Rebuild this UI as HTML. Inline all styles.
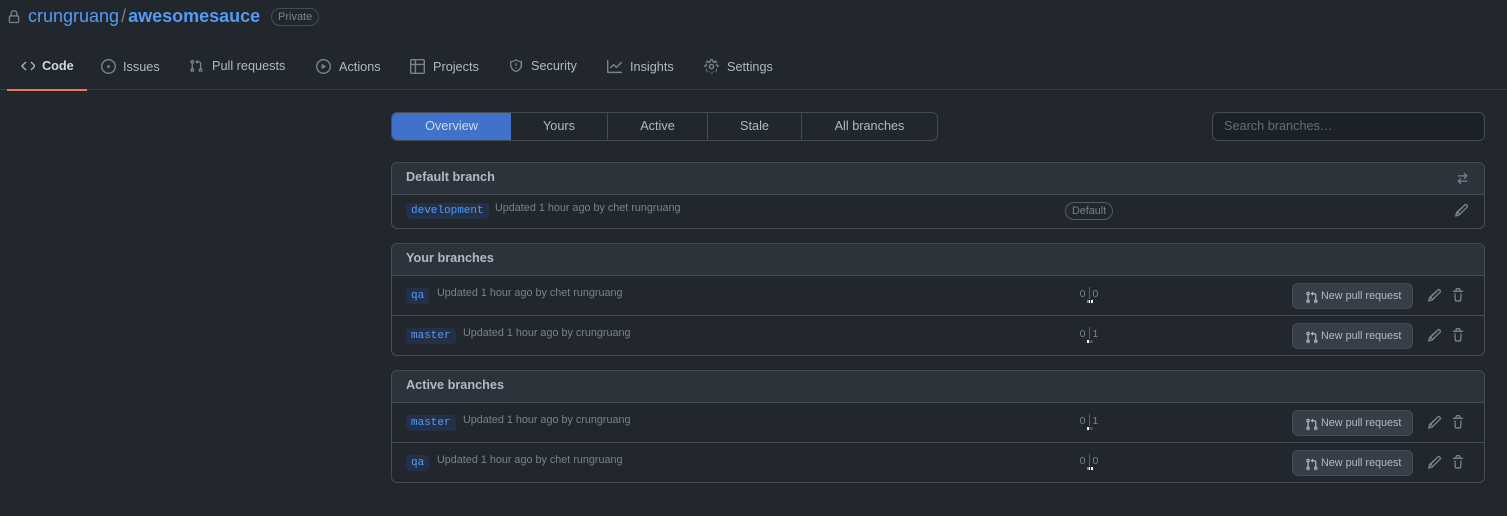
<!DOCTYPE html>
<html><head><meta charset="utf-8"><style>
*{box-sizing:border-box;margin:0;padding:0}
body{width:1507px;height:516px;background:#22272e;font-family:"Liberation Sans",sans-serif;color:#adbac7;position:relative;overflow:hidden}
.abs{position:absolute}
svg{fill:#768390}
.nav{position:absolute;top:59px;font-size:12.7px;color:#adbac7;display:flex;align-items:center;gap:7px}
.box{position:absolute;left:391px;width:1094px;border:1px solid #444c56;border-radius:6px;overflow:hidden}
.hd{background:#2d333b;height:32px;border-bottom:1px solid #444c56;font-size:12.7px;font-weight:bold;color:#adbac7;padding:7px 14px}
.row{height:40px;border-bottom:1px solid #444c56;position:relative}
.row:last-child{border-bottom:none}
.br{position:absolute;left:14px;top:12px;font-family:"Liberation Mono",monospace;font-size:11px;color:#539bf5;background:#243048;border-radius:4px;padding:2px 5px}
.up{position:absolute;top:11px;font-size:10.8px;color:#768390}
.cnt{position:absolute;left:685px;top:11px;font-size:10.5px;color:#768390;width:24px;text-align:center}
.cnt i{display:inline-block;width:1px;height:12px;background:#545d68;vertical-align:-2px;margin:0 3px}
.bar{position:absolute;left:695px;top:24px;width:6px;height:3px}
.btn{position:absolute;left:900px;top:7px;width:121px;height:26px;background:#373e47;border:1px solid #444c56;border-radius:6px;font-size:10.8px;color:#adbac7;padding:6px 0 0 12px;display:flex;gap:3px}
.btn svg{margin-top:1px}
.ic{position:absolute;top:12px}
</style></head><body>
<svg class="abs" style="left:7px;top:10px" width="14" height="14" viewBox="0 0 16 16"><path d="M4 4a4 4 0 018 0v2h.25c.97 0 1.75.78 1.75 1.75v5.5c0 .97-.78 1.75-1.75 1.75h-8.5C2.78 15 2 14.22 2 13.25v-5.5C2 6.78 2.78 6 3.75 6H4zm8.25 3.5h-8.5a.25.25 0 00-.25.25v5.5c0 .14.11.25.25.25h8.5a.25.25 0 00.25-.25v-5.5a.25.25 0 00-.25-.25zM10.5 6V4a2.5 2.5 0 00-5 0v2z"/></svg>
<div class="abs" style="left:28px;top:6px;font-size:18px;color:#539bf5">crungruang <span style="color:#768390;margin:0 -3px">/</span> <b>awesomesauce</b></div>
<div class="abs" style="left:271px;top:8px;font-size:11px;color:#768390;border:1px solid #444c56;border-radius:10px;padding:2px 6px">Private</div>

<div class="nav" style="left:21px;font-weight:bold;color:#cdd9e5"><svg width="14" height="14" viewBox="0 0 16 16"><path d="M4.72 3.22a.75.75 0 011.06 1.06L2.06 8l3.72 3.72a.75.75 0 11-1.06 1.06L.47 8.53a.75.75 0 010-1.06zm6.56 0a.75.75 0 011.06 0l4.25 4.25a.75.75 0 010 1.06l-4.25 4.25a.75.75 0 01-1.06-1.06L14.94 8l-3.72-3.72a.75.75 0 010-1.06z" fill="#adbac7"/></svg>Code</div>
<div class="nav" style="left:101px"><svg width="15" height="15" viewBox="0 0 16 16"><path d="M8 9.5a1.5 1.5 0 100-3 1.5 1.5 0 000 3z"/><path d="M8 0a8 8 0 110 16A8 8 0 018 0zM1.5 8a6.5 6.5 0 1013 0 6.5 6.5 0 00-13 0z"/></svg>Issues</div>
<div class="nav" style="left:189px;gap:9px"><svg width="14" height="14" viewBox="0 0 16 16"><path d="M1.5 3.25a2.25 2.25 0 113 2.12v5.26a2.25 2.25 0 11-1.5 0V5.37A2.25 2.25 0 011.5 3.25zm5.68-.03L9.44.97a.25.25 0 01.43.17V2.5h1.38A2.75 2.75 0 0114 5.25v5.38a2.25 2.25 0 11-1.5 0V5.25c0-.69-.56-1.25-1.25-1.25H9.87v1.36a.25.25 0 01-.43.18L7.18 3.54a.25.25 0 010-.32zM3.750 12.5a.75.75 0 100 1.5.75.75 0 000-1.5zm9.5 0a.75.75 0 100 1.5.75.75 0 000-1.5zM3.75 2.5a.75.75 0 100 1.5.75.75 0 000-1.5z"/></svg>Pull requests</div>
<div class="nav" style="left:316px;gap:8px"><svg width="15" height="15" viewBox="0 0 16 16"><path d="M8 0a8 8 0 110 16A8 8 0 018 0zM1.5 8a6.5 6.5 0 1013 0 6.5 6.5 0 00-13 0zm4.88-2.64 4.29 2.43a.25.25 0 010 .43l-4.29 2.43A.25.25 0 016 10.43V5.57a.25.25 0 01.38-.21z"/></svg>Actions</div>
<div class="nav" style="left:410px;gap:8px"><svg width="15" height="15" viewBox="0 0 16 16"><path d="M0 1.75C0 .78.78 0 1.75 0h12.5C15.22 0 16 .78 16 1.75v12.5A1.75 1.75 0 0114.25 16H1.75A1.75 1.75 0 010 14.25zM6.5 6.5v8h7.75a.25.25 0 00.25-.25V6.5zm8-1.5V1.75a.25.25 0 00-.25-.25H6.5V5zM5 5V1.5H1.75a.25.25 0 00-.25.25V5zM1.5 6.5v7.75c0 .14.11.25.25.25H5v-8z"/></svg>Projects</div>
<div class="nav" style="left:509px;gap:8px"><svg width="14" height="14" viewBox="0 0 16 16"><path d="M7.47.22a.75.75 0 011.06 0c1.4 1.14 3.5 2.02 5.72 2.030.41 0 .75.34.75.75v3.25c0 4.2-2.57 7.35-6.72 8.7a.75.75 0 01-.46 0C3.67 13.6 1.25 10.45 1.25 6.25V3c0-.41.34-.75.75-.75 2.22-.01 4.32-.89 5.470-2.03zM2.75 3.7v2.55c0 3.4 1.92 5.97 5.25 7.2 3.33-1.23 5.25-3.8 5.25-7.2V3.7A10.4 10.4 0 018 1.72 10.4 10.4 0 012.75 3.7zM8 4.5a.75.75 0 01.75.75v2a.75.75 0 01-1.5 0v-2A.75.75 0 018 4.5zm0 5a.75.75 0 110 1.5.75.75 0 010-1.5z"/></svg>Security</div>
<div class="nav" style="left:607px;gap:8px"><svg width="15" height="15" viewBox="0 0 16 16"><path d="M1.5 1.75V13.5h13.75a.75.75 0 010 1.5H.75a.75.75 0 01-.75-.75V1.75a.75.75 0 011.5 0zm14.28 2.53-5.25 5.25a.75.75 0 01-1.06 0L7 7.06 4.28 9.78a.75.75 0 01-1.06-1.06l3.25-3.25a.75.75 0 011.06 0L10 7.94l4.72-4.72a.75.75 0 111.06 1.06z"/></svg>Insights</div>
<div class="nav" style="left:704px;gap:8px"><svg width="15" height="15" viewBox="0 0 16 16"><path d="M8 0a8.2 8.2 0 01.7.03c.4.03.7.3.8.68l.4 1.6c.2.07.4.16.6.26l1.4-.85a.9.9 0 011 .06c.4.3.7.6 1 1a.9.9 0 01.07 1l-.85 1.4c.1.2.19.4.26.6l1.6.4c.38.1.65.4.68.8a8.2 8.2 0 010 1.4.9.9 0 01-.68.8l-1.6.4c-.07.2-.16.4-.26.6l.85 1.4a.9.9 0 01-.06 1c-.3.4-.6.7-1 1a.9.9 0 01-1 .07l-1.4-.85c-.2.1-.4.19-.6.26l-.4 1.6a.9.9 0 01-.8.68 8.2 8.2 0 01-1.4 0 .9.9 0 01-.8-.68l-.4-1.6c-.2-.07-.4-.16-.6-.26l-1.4.85a.9.9 0 01-1-.06c-.4-.3-.7-.6-1-1a.9.9 0 01-.07-1l.85-1.4c-.1-.2-.19-.4-.26-.6l-1.6-.4a.9.9 0 01-.68-.8 8.2 8.2 0 010-1.4.9.9 0 01.68-.8l1.6-.4c.07-.2.16-.4.26-.6l-.85-1.4a.9.9 0 01.06-1c.3-.4.6-.7 1-1a.9.9 0 011-.07l1.4.85c.2-.1.4-.19.6-.26l.4-1.6A.9.9 0 017.3.03 8.2 8.2 0 018 0zm-.45 1.5-.4 1.7a.75.75 0 01-.55.55 5 5 0 00-1.2.5.75.75 0 01-.76 0l-1.5-.9-.64.64.9 1.5a.75.75 0 010 .76 5 5 0 00-.5 1.2.75.75 0 01-.55.55l-1.7.4v.9l1.7.4c.27.07.48.28.55.55.1.42.27.82.5 1.2.14.24.14.53 0 .76l-.9 1.5.64.64 1.5-.9a.75.75 0 01.76 0c.38.23.78.4 1.2.5.27.07.48.28.55.55l.4 1.7h.9l.4-1.7a.75.75 0 01.55-.55 5 5 0 001.2-.5.75.75 0 01.76 0l1.5.9.64-.64-.9-1.5a.75.75 0 010-.76c.23-.38.4-.78.5-1.2a.75.75 0 01.55-.55l1.7-.4v-.9l-1.7-.4a.75.75 0 01-.55-.55 5 5 0 00-.5-1.2.75.75 0 010-.76l.9-1.5-.64-.64-1.5.9a.75.75 0 01-.76 0 5 5 0 00-1.2-.5.75.75 0 01-.55-.55l-.4-1.7zM8 5a3 3 0 110 6 3 3 0 010-6zm0 1.5a1.5 1.5 0 100 3 1.5 1.5 0 000-3z"/></svg>Settings</div>
<div class="abs" style="left:0;top:89px;width:1507px;height:1px;background:#373e47"></div>
<div class="abs" style="left:7px;top:89px;width:80px;height:2px;background:#ec775c"></div>

<div class="abs" style="left:391px;top:112px;width:547px;height:29px;border:1px solid #444c56;border-radius:6px;display:flex;font-size:12.7px;color:#adbac7;overflow:hidden">
<div style="width:119px;background:#4172cb;color:#cdd9e5;text-align:center;padding-top:6px">Overview</div>
<div style="width:97px;border-right:1px solid #444c56;text-align:center;padding-top:6px">Yours</div>
<div style="width:100px;border-right:1px solid #444c56;text-align:center;padding-top:6px">Active</div>
<div style="width:94px;border-right:1px solid #444c56;text-align:center;padding-top:6px">Stale</div>
<div style="flex:1;text-align:center;padding-top:6px">All branches</div>
</div>
<div class="abs" style="left:1212px;top:112px;width:273px;height:29px;border:1px solid #444c56;border-radius:6px;background:#1c2128;font-size:12.7px;color:#636e7b;padding:6px 11px">Search branches…</div>

<div class="box" style="top:162px;height:67px">
<div class="hd">Default branch</div>
<svg class="abs" style="left:1064px;top:9px" width="13" height="13" viewBox="0 0 16 16"><path d="M5.22 14.78a.75.75 0 001.06-1.06L4.56 12h8.69a.75.75 0 000-1.5H4.56l1.72-1.72a.75.75 0 00-1.06-1.06l-3 3a.75.75 0 000 1.06zm5.56-6.5a.75.75 0 11-1.060-1.06l1.72-1.72H2.75a.75.75 0 010-1.5h8.69L9.72 2.28a.75.75 0 011.06-1.06l3 3a.75.75 0 010 1.06z"/></svg>
<div class="row"><span class="br" style="top:8px">development</span><span class="up" style="left:103px;top:7px">Updated 1 hour ago by chet rungruang</span>
<span class="abs" style="left:673px;top:7px;font-size:10.8px;color:#768390;border:1px solid #545d68;border-radius:10px;padding:2px 6px">Default</span>
<svg class="ic" style="left:1063px;top:8px" width="14" height="14" viewBox="0 0 16 16"><path d="M11.01 1.47a1.75 1.75 0 012.47 0l1.05 1.05c.68.68.68 1.79 0 2.47l-9.1 9.1c-.2.2-.45.36-.73.44l-3.74 1.07a.75.75 0 01-.93-.93l1.07-3.74c.08-.28.24-.53.44-.73zm1.41 1.06a.25.25 0 00-.35 0l-8.06 8.06 1.4 1.4 8.06-8.06a.25.25 0 000-.35zM3.05 11.7l-.6 2.1 2.1-.6z"/></svg>
</div></div>

<div class="box" style="top:243px;height:113px"><div class="hd">Your branches</div>
<div class="row"><span class="br">qa</span><span class="up" style="left:45px">Updated 1 hour ago by chet rungruang</span>
<span class="cnt">0<i></i>0</span><span class="bar" style="background:linear-gradient(90deg,#768390 0 2px,#fff 2px 3px,#22272e 3px 4px,#fff 4px 6px)"></span>
<div class="btn">PR New pull request</div><svg class="ic" style="left:1036px" width="14" height="14" viewBox="0 0 16 16"><path d="M11.01 1.47a1.75 1.75 0 012.47 0l1.05 1.05c.68.68.68 1.79 0 2.47l-9.1 9.1c-.2.2-.45.36-.73.44l-3.74 1.07a.75.75 0 01-.93-.93l1.07-3.74c.08-.28.24-.53.44-.73zm1.41 1.06a.25.25 0 00-.35 0l-8.06 8.06 1.4 1.4 8.06-8.06a.25.25 0 000-.35zM3.05 11.7l-.6 2.1 2.1-.6z"/></svg>TR</div>
<div class="row"><span class="br">master</span><span class="up" style="left:71px">Updated 1 hour ago by crungruang</span>
<span class="cnt">0<i></i>1</span><span class="bar" style="background:linear-gradient(90deg,#fff 0 2px,#444c56 2px 6px)"></span>
<div class="btn">PR New pull request</div><svg class="ic" style="left:1036px" width="14" height="14" viewBox="0 0 16 16"><path d="M11.01 1.47a1.75 1.75 0 012.47 0l1.05 1.05c.68.68.68 1.79 0 2.47l-9.1 9.1c-.2.2-.45.36-.73.44l-3.74 1.07a.75.75 0 01-.93-.93l1.07-3.74c.08-.28.24-.53.44-.73zm1.41 1.06a.25.25 0 00-.35 0l-8.06 8.06 1.4 1.4 8.06-8.06a.25.25 0 000-.35zM3.05 11.7l-.6 2.1 2.1-.6z"/></svg>TR</div>
</div>

<div class="box" style="top:370px;height:113px"><div class="hd">Active branches</div>
<div class="row"><span class="br">master</span><span class="up" style="left:71px">Updated 1 hour ago by crungruang</span>
<span class="cnt">0<i></i>1</span><span class="bar" style="background:linear-gradient(90deg,#fff 0 2px,#444c56 2px 6px)"></span>
<div class="btn">PR New pull request</div><svg class="ic" style="left:1036px" width="14" height="14" viewBox="0 0 16 16"><path d="M11.01 1.47a1.75 1.75 0 012.47 0l1.05 1.05c.68.68.68 1.79 0 2.47l-9.1 9.1c-.2.2-.45.36-.73.44l-3.74 1.07a.75.75 0 01-.93-.93l1.07-3.74c.08-.28.24-.53.44-.73zm1.41 1.06a.25.25 0 00-.35 0l-8.06 8.06 1.4 1.4 8.06-8.06a.25.25 0 000-.35zM3.05 11.7l-.6 2.1 2.1-.6z"/></svg>TR</div>
<div class="row"><span class="br">qa</span><span class="up" style="left:45px">Updated 1 hour ago by chet rungruang</span>
<span class="cnt">0<i></i>0</span><span class="bar" style="background:linear-gradient(90deg,#768390 0 2px,#fff 2px 3px,#22272e 3px 4px,#fff 4px 6px)"></span>
<div class="btn">PR New pull request</div><svg class="ic" style="left:1036px" width="14" height="14" viewBox="0 0 16 16"><path d="M11.01 1.47a1.75 1.75 0 012.47 0l1.05 1.05c.68.68.68 1.79 0 2.47l-9.1 9.1c-.2.2-.45.36-.73.44l-3.74 1.07a.75.75 0 01-.93-.93l1.07-3.74c.08-.28.24-.53.44-.73zm1.41 1.06a.25.25 0 00-.35 0l-8.06 8.06 1.4 1.4 8.06-8.06a.25.25 0 000-.35zM3.05 11.7l-.6 2.1 2.1-.6z"/></svg>TR</div>
</div>

<script>
var pr='<svg width="13" height="13" viewBox="0 0 16 16"><path d="M1.5 3.25a2.25 2.25 0 113 2.12v5.26a2.25 2.25 0 11-1.5 0V5.37A2.25 2.25 0 011.5 3.25zm5.68-.03L9.44.97a.25.25 0 01.43.17V2.5h1.38A2.75 2.75 0 0114 5.25v5.38a2.25 2.25 0 11-1.5 0V5.25c0-.69-.56-1.25-1.25-1.25H9.87v1.36a.25.25 0 01-.43.18L7.18 3.54a.25.25 0 010-.32zM3.75 12.5a.75.75 0 100 1.5.75.75 0 000-1.5zm9.5 0a.75.75 0 100 1.5.75.75 0 000-1.5zM3.75 2.5a.75.75 0 100 1.5.75.75 0 000-1.5z" fill="#adbac7"/></svg>';
var tr='<svg class="ic" style="left:1059px" width="14" height="14" viewBox="0 0 16 16"><path d="M11 1.75V3h2.25a.75.75 0 010 1.5H2.75a.75.75 0 010-1.5H5V1.75C5 .78 5.78 0 6.75 0h2.5C10.22 0 11 .78 11 1.75zM6.5 1.75V3h3V1.75a.25.25 0 00-.25-.25h-2.5a.25.25 0 00-.25.25zM4.5 6a.75.75 0 01.75.7l.5 7.05c.01.14.12.25.25.25h4c.13 0 .24-.11.25-.25l.5-7.05a.75.75 0 011.5.1l-.5 7.05A1.75 1.75 0 0110 15.5H6a1.75 1.75 0 01-1.75-1.65L3.75 6.8A.75.75 0 014.5 6z"/></svg>';
document.querySelectorAll('.btn').forEach(function(b){b.innerHTML=pr+'New pull request';});
document.querySelectorAll('.row').forEach(function(r){r.innerHTML=r.innerHTML.replace(/TR\s*$/,tr);});
</script>
</body></html>
